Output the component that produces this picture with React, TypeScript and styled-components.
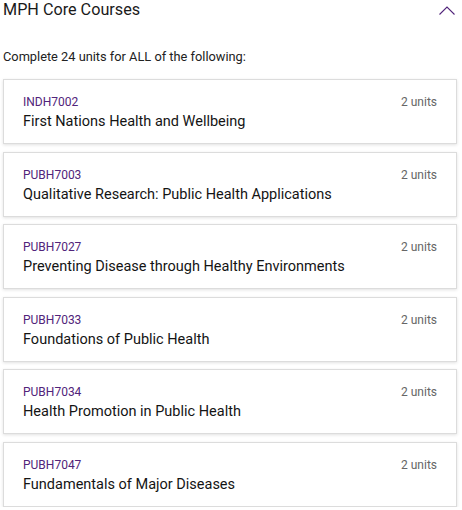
import React from "react";
import styled, { createGlobalStyle } from "styled-components";

const Global = createGlobalStyle`
  html, body { margin: 0; padding: 0; background: #fff; }
  body { font-family: Roboto, "Liberation Sans", sans-serif; }
`;

const Section = styled.section`
  width: 454px;
  margin-left: 3px;
  display: flex;
  flex-direction: column;
`;

const Header = styled.div`
  display: flex;
  align-items: center;
  justify-content: space-between;
  height: 20px;
  padding-right: 2px;
`;

const Title = styled.h2`
  margin: 0;
  font-size: 16.2px;
  font-weight: 400;
  color: #1a1a1a;
  line-height: 20px;
`;

const Chevron = styled.svg`
  width: 16px;
  height: 9px;
  margin-top: 1px;
`;

const Intro = styled.p`
  margin: 29px 0 0;
  font-size: 12.8px;
  line-height: 16px;
  color: #222;
`;

const List = styled.div`
  display: flex;
  flex-direction: column;
  gap: 7.6px;
  margin-top: 14px;
`;

const Card = styled.div`
  display: flex;
  justify-content: space-between;
  align-items: flex-start;
  border: 1px solid #dcdcdc;
  box-shadow: 0 1px 3px rgba(0, 0, 0, 0.12);
  background: #fff;
  padding: 14px 19px 11px 19px;
  height: 65px;
  box-sizing: border-box;
`;

const Info = styled.div`
  display: flex;
  flex-direction: column;
  gap: 3px;
`;

const Code = styled.div`
  font-size: 12px;
  line-height: 16px;
  color: #51247a;
`;

const Name = styled.div`
  font-size: 14.5px;
  font-weight: 400;
  line-height: 18px;
  color: #141414;
`;

const Units = styled.div`
  font-size: 12px;
  line-height: 16px;
  color: #666;
`;

const courses = [
  ["INDH7002", "First Nations Health and Wellbeing"],
  ["PUBH7003", "Qualitative Research: Public Health Applications"],
  ["PUBH7027", "Preventing Disease through Healthy Environments"],
  ["PUBH7033", "Foundations of Public Health"],
  ["PUBH7034", "Health Promotion in Public Health"],
  ["PUBH7047", "Fundamentals of Major Diseases"],
];

export default function App() {
  return (
    <>
      <Global />
      <Section>
        <Header>
          <Title>MPH Core Courses</Title>
          <Chevron viewBox="0 0 16 9">
            <path d="M0.5 8.5 L8 1 L15.5 8.5" fill="none" stroke="#51247a" strokeWidth="1.1" />
          </Chevron>
        </Header>
        <Intro>Complete 24 units for ALL of the following:</Intro>
        <List>
          {courses.map(([code, name]) => (
            <Card key={code}>
              <Info>
                <Code>{code}</Code>
                <Name>{name}</Name>
              </Info>
              <Units>2 units</Units>
            </Card>
          ))}
        </List>
      </Section>
    </>
  );
}
